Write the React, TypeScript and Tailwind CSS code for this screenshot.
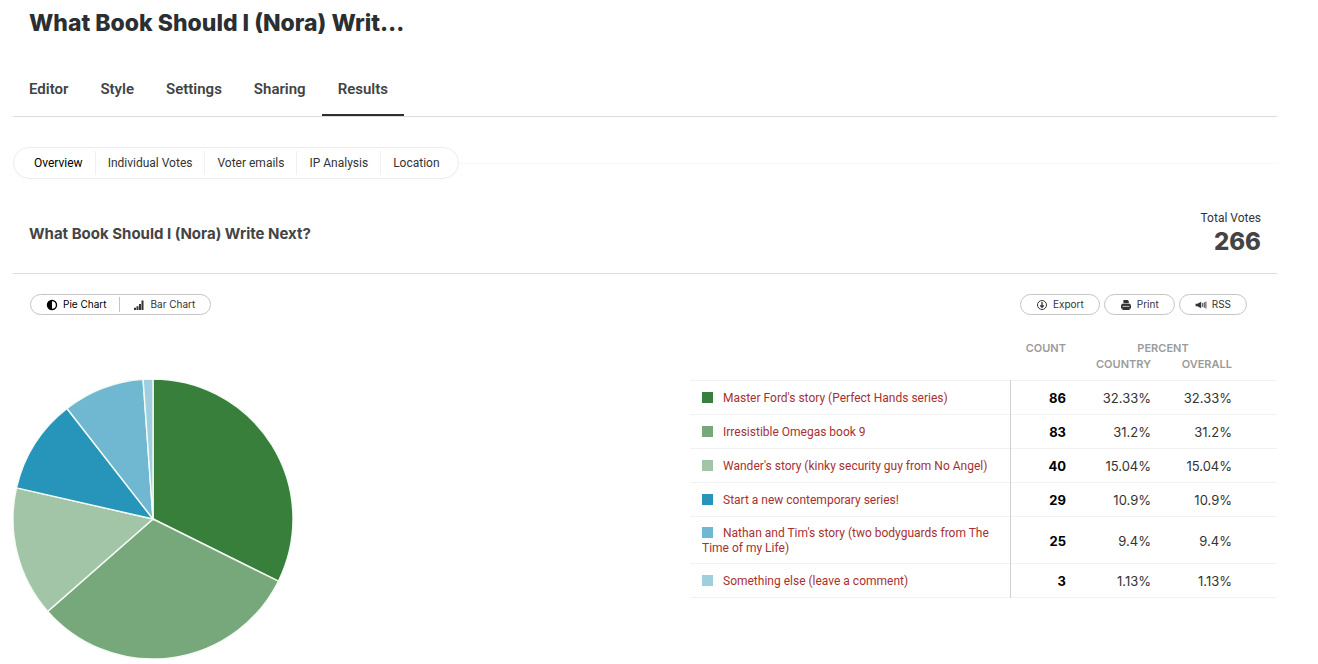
import type { ReactNode } from 'react';
import { clsx } from 'clsx';

const TABS = ['Editor', 'Style', 'Settings', 'Sharing', 'Results'];

const SUB_TABS = ['Overview', 'Individual Votes', 'Voter emails', 'IP Analysis', 'Location'];

const ANSWERS = [
  { label: "Master Ford's story (Perfect Hands series)", count: 86, percent: '32.33%', color: '#387f3c' },
  { label: 'Irresistible Omegas book 9', count: 83, percent: '31.2%', color: '#77a87b' },
  { label: "Wander's story (kinky security guy from No Angel)", count: 40, percent: '15.04%', color: '#a3c5a7' },
  { label: 'Start a new contemporary series!', count: 29, percent: '10.9%', color: '#2795b9' },
  { label: "Nathan and Tim's story (two bodyguards from The Time of my Life)", count: 25, percent: '9.4%', color: '#70b8d1' },
  { label: 'Something else (leave a comment)', count: 3, percent: '1.13%', color: '#9fcfdf' },
];

const TOTAL = ANSWERS.reduce((sum, a) => sum + a.count, 0);

function PieIcon() {
  return (
    <svg viewBox="0 0 12 12" className="size-3" aria-hidden="true">
      <circle cx="6" cy="6" r="4.5" fill="none" stroke="currentColor" strokeWidth="1.4" />
      <path d="M6 1.5a4.5 4.5 0 0 0 0 9z" fill="currentColor" />
    </svg>
  );
}

function BarsIcon() {
  return (
    <svg viewBox="0 0 12 12" className="size-3" fill="currentColor" aria-hidden="true">
      <path d="M1 8.8h2V11H1zM3.5 7.2h2V11h-2zM6 5h2v6H6zM8.5 1.5h2V11h-2z" />
    </svg>
  );
}

function ExportIcon() {
  return (
    <svg viewBox="0 0 12 12" className="size-3" fill="none" stroke="currentColor" aria-hidden="true">
      <circle cx="6" cy="6" r="4.5" />
      <path d="M6 3v5.2M4.2 6.4 6 8.3l1.8-1.9" strokeWidth="1.3" />
    </svg>
  );
}

function PrintIcon() {
  return (
    <svg viewBox="0 0 12 12" className="size-3" fill="currentColor" aria-hidden="true">
      <path d="M3.4 1h4.2l1.2 1.2v2H3.4z" />
      <path d="M2 4.8h8l1 1.4v3.2H1V6.2z" />
      <path d="M2.6 7.4h6.8" stroke="#fff" strokeWidth=".7" />
      <path d="M2.4 8.6h7.2V11H2.4z" />
    </svg>
  );
}

function SpeakerIcon() {
  return (
    <svg viewBox="0 0 12 12" className="size-3" fill="currentColor" aria-hidden="true">
      <path d="M.6 4.8h1.8L6.2 2.8v6.4L2.4 7.2H.6z" />
      <path d="M7.7 4v4M9.3 3.3v5.4M10.9 2.6v6.8" stroke="currentColor" strokeWidth=".9" />
    </svg>
  );
}

function PillButton({ icon, children }: { icon: ReactNode; children: ReactNode }) {
  return (
    <button className="flex h-[21px] items-center gap-[5px] rounded-full border border-[#c4c4c4] px-[15px] text-[10px] text-[#333]">
      {icon}
      {children}
    </button>
  );
}

function PieChart() {
  let start = 0;
  const point = (share: number) => {
    const angle = share * 2 * Math.PI;
    return `${140 + 140 * Math.sin(angle)} ${140 - 140 * Math.cos(angle)}`;
  };

  return (
    <svg viewBox="0 0 280 280" className="size-[280px] shrink-0" role="img" aria-label="Votes by answer">
      {ANSWERS.map((a) => {
        const from = start;
        start += a.count / TOTAL;
        return (
          <path
            key={a.label}
            d={`M140 140 L${point(from)} A140 140 0 0 1 ${point(start)} Z`}
            fill={a.color}
            stroke="#f4fbf4"
            strokeWidth="1.4"
          />
        );
      })}
    </svg>
  );
}

function ResultsTable() {
  return (
    <table className="w-[587px] table-fixed border-collapse">
      <colgroup>
        <col className="w-[320px]" />
        <col className="w-[56px]" />
        <col className="w-[85px]" />
        <col className="w-[81px]" />
        <col />
      </colgroup>
      <thead className="text-right text-[11px] leading-4 text-[#9b9b9b]">
        <tr>
          <td rowSpan={2} />
          <th scope="col" rowSpan={2} className="text-right align-top font-semibold">COUNT</th>
          <th scope="colgroup" colSpan={2} className="pl-7 text-center font-semibold">PERCENT</th>
          <td rowSpan={2} />
        </tr>
        <tr>
          <th scope="col" className="pb-2 text-right font-semibold">COUNTRY</th>
          <th scope="col" className="pb-2 text-right font-semibold">OVERALL</th>
        </tr>
      </thead>
      <tbody className="text-right text-[13px] leading-[17px] text-[#333]">
        {ANSWERS.map((a) => (
          <tr key={a.label} className="border-y border-[#f2f2f2]">
            <th scope="row" className="border-r border-r-[#d0d0d0] px-3 pt-[9px] pb-[7px] text-left font-['Roboto',sans-serif] text-[12px] leading-[15px] font-normal text-[#a8312f]">
              <span className="mr-[10px] inline-block size-[11px] align-[-1px]" style={{ backgroundColor: a.color }} />
              {a.label}
            </th>
            <td className="pt-[9px] pb-[7px] font-bold text-black">{a.count}</td>
            <td className="pt-[9px] pb-[7px]">{a.percent}</td>
            <td className="pt-[9px] pb-[7px]">{a.percent}</td>
            <td />
          </tr>
        ))}
      </tbody>
    </table>
  );
}

export default function App() {
  return (
    <main className="bg-white pr-[41px] pl-[13px] font-['Inter','Liberation_Sans',sans-serif] text-[#333]">
      <h1 className="px-4 pt-2 text-[23px] leading-[30px] font-extrabold text-[#2b2f31]">What Book Should I (Nora) Writ…</h1>

      <nav className="mt-6 flex border-b border-[#dcdcdc]">
        {TABS.map((tab) => (
          <a
            key={tab}
            href="#"
            className={clsx(
              "border-b-2 px-4 pt-[17px] pb-[15px] font-['Roboto',sans-serif] text-[15px] leading-5 font-semibold text-[#3f4446]",
              tab === 'Results' ? 'border-[#2b2f31]' : 'border-transparent',
            )}
          >
            {tab}
          </a>
        ))}
      </nav>

      <div className="mt-[30px] flex items-center">
        <nav className="flex h-8 items-center rounded-full border border-[#ececec] pr-[6px] pl-2 font-['Roboto',sans-serif]">
          {SUB_TABS.map((tab, i) => (
            <a
              key={tab}
              href="#"
              className={clsx(
                'px-3 text-[12px] leading-6',
                i === 0 ? 'text-black' : 'border-l border-[#f0f0f0] text-[#333]',
              )}
            >
              {tab}
            </a>
          ))}
        </nav>
        <div className="h-px flex-1 bg-[#f8f8f8]" />
      </div>

      <header className="mt-[31px] flex items-center justify-between border-b border-[#dcdcdc] px-4 pb-[15px]">
        <h2 className="text-[15px] leading-6 font-bold text-[#444]">What Book Should I (Nora) Write Next?</h2>
        <p className="flex flex-col text-right">
          <span className="font-['Roboto',sans-serif] text-[12px] leading-4">Total Votes</span>
          <span className="text-[24px] leading-8 font-extrabold text-[#444]">{TOTAL}</span>
        </p>
      </header>

      <div className="mt-5 flex items-center justify-between pr-[30px] pl-[17px]">
        <div className="flex h-[21px] items-center rounded-full border border-[#c4c4c4] text-[10px]">
          <button className="flex items-center gap-[5px] pr-[13px] pl-[15px] text-black">
            <PieIcon />
            Pie Chart
          </button>
          <button className="flex items-center gap-[5px] border-l border-[#c4c4c4] pr-[15px] pl-[13px]">
            <BarsIcon />
            Bar Chart
          </button>
        </div>
        <div className="flex gap-1">
          <PillButton icon={<ExportIcon />}>Export</PillButton>
          <PillButton icon={<PrintIcon />}>Print</PillButton>
          <PillButton icon={<SpeakerIcon />}>RSS</PillButton>
        </div>
      </div>

      <div className="mt-[25px] flex items-start justify-between">
        <div className="pt-[39px]">
          <PieChart />
        </div>
        <ResultsTable />
      </div>
    </main>
  );
}
